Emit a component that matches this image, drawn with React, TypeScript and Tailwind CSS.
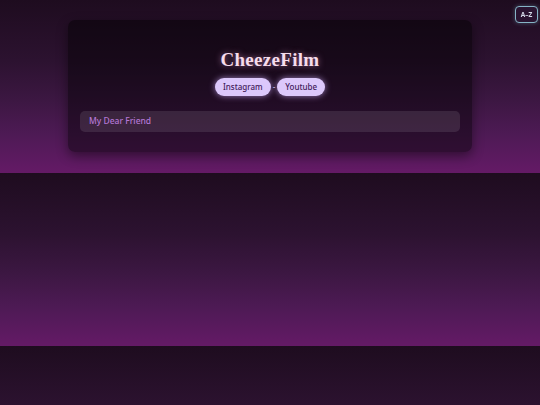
export default function App() {
  return (
    <main className="min-h-screen bg-[#1e0c1f] bg-[linear-gradient(to_bottom,#1e0c1f_0%,#2c1230_35%,#3c1742_58%,#4e1a55_78%,#641a66_100%)] bg-[length:100%_173px] bg-repeat font-['Noto_Sans',sans-serif]">
      <div className="fixed top-[6px] right-[2px] flex h-[17px] w-[23px] items-center justify-center rounded-[4px] border-[1.5px] border-[#86b4c6] bg-[#2a1431] text-[6.5px] font-bold text-[#d6dcea] shadow-[0_0_4px_rgba(120,180,200,0.4)]">
        A–Z
      </div>

      <section className="px-[68px] pt-[20px] pb-[21px]">
        <div className="rounded-[7px] bg-black/45 px-[12px] pt-[28px] pb-[20px] shadow-[0_4px_12px_rgba(0,0,0,0.45)]">
          <h1 className="text-center font-['Liberation_Serif',serif] text-[19px] leading-[24px] font-bold tracking-[0.3px] text-[#f6dcec] [text-shadow:0_0_6px_rgba(240,170,220,0.55)]">
            CheezeFilm
          </h1>

          <div className="mt-[6px] flex items-center justify-center gap-[2px]">
            <a className="flex h-[18px] items-center rounded-full bg-[#dcc8fb] px-[8px] text-[8px] font-medium text-[#43205c] shadow-[0_0_6px_rgba(205,170,250,0.7)]">
              Instagram
            </a>
            <span className="text-[8px] text-[#d9c6f0]">-</span>
            <a className="flex h-[18px] items-center rounded-full bg-[#dcc8fb] px-[8px] text-[8px] font-medium text-[#43205c] shadow-[0_0_6px_rgba(205,170,250,0.7)]">
              Youtube
            </a>
          </div>

          <div className="mt-[15px] flex h-[21px] items-center rounded-[5px] bg-white/10 px-[9px] text-[8.5px] font-medium text-[#b577d6]">
            My Dear Friend
          </div>
        </div>
      </section>
    </main>
  );
}
